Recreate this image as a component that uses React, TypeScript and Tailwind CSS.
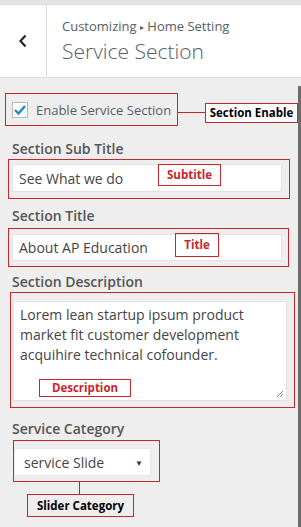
import React from "react";

const RED = "border-[#c9252d]";

function Label({ children, className = "" }: { children: React.ReactNode; className?: string }) {
  return <div className={`pl-[12px] text-[14px] leading-[20px] font-semibold text-[#555555] ${className}`}>{children}</div>;
}

function Tag({ children, className = "", dark = false }: { children: React.ReactNode; className?: string; dark?: boolean }) {
  return (
    <div
      className={`absolute border ${RED} flex items-center justify-center text-[11.5px] font-bold ${dark ? "bg-white text-black" : "text-[#c9252d]"} ${className}`}
    >
      {children}
    </div>
  );
}

export default function App() {
  const font = { fontFamily: '"Open Sans", "Noto Sans", sans-serif' };
  return (
    <div className="relative w-[301px] h-[527px] bg-[#eeeeee] overflow-hidden text-[#555d66] flex flex-col" style={font}>
      <div className="h-[4px] bg-[#e4e4e4] shrink-0" />
      <div className="flex h-[74px] shrink-0 bg-white border-t border-b border-[#dddddd]">
        <div className="w-[47px] flex items-center justify-center border-r border-[#dddddd]">
          <svg width="10" height="14" viewBox="0 0 10 14">
            <path d="M7.5 1.5 L2.5 7 L7.5 12.5" fill="none" stroke="#23282d" strokeWidth="2.2" />
          </svg>
        </div>
        <div className="flex flex-col pl-[15px] pt-[11px]">
          <div className="text-[13px] leading-[20px] text-[#555d66]">
            Customizing <span className="text-[8px] relative -top-[1px]">▸</span> Home Setting
          </div>
          <div className="text-[21px] leading-[26px] font-light text-[#555d66]">Service Section</div>
        </div>
      </div>
      <div className="absolute right-0 top-[86px] bottom-0 w-[3px] bg-[#6b6b6b]" />

      {/* Enable */}
      <div className="relative mt-[15px] ml-[5px] w-[173px] h-[33px] shrink-0">
        <div className={`h-full border ${RED} flex items-center gap-[8px] pl-[6px]`}>
          <div className="w-[16px] h-[16px] bg-white border border-[#b4b9be] flex items-center justify-center">
            <svg width="14" height="12" viewBox="0 0 14 12">
              <path d="M2 6 L5.5 9.5 L12 2" fill="none" stroke="#1e8cbe" strokeWidth="2.4" />
            </svg>
          </div>
          <span className="text-[13px] leading-[18px]">Enable Service Section</span>
        </div>
        <div className="absolute left-[172px] top-[19px] w-[28px] h-px bg-[#c9252d]" />
        <Tag dark className="left-[200px] top-[10px] w-[93px] h-[20px]">Section Enable</Tag>
      </div>

      {/* Sub title */}
      <Label className="mt-[13px]">Section Sub Title</Label>
      <div className={`relative ml-[8px] mt-[0px] w-[282px] h-[40px] border ${RED} pl-[3px] pt-[4px] shrink-0`}>
        <div className="w-[270px] h-[28px] bg-white border border-[#e2e2e2] flex items-center pl-[6px] text-[14px] text-[#444]">See What we do</div>
        <Tag className="left-[149px] top-[4px] w-[63px] h-[22px]">Subtitle</Tag>
      </div>

      {/* Title */}
      <Label className="mt-[7px]">Section Title</Label>
      <div className={`relative ml-[8px] mt-[2px] w-[281px] h-[39px] border ${RED} pl-[3px] pt-[5px] shrink-0`}>
        <div className="w-[270px] h-[27px] bg-white border border-[#e2e2e2] flex items-center pl-[6px] text-[14px] text-[#444]">About AP Education</div>
        <Tag className="left-[166px] top-[4px] w-[44px] h-[24px]">Title</Tag>
      </div>

      {/* Description */}
      <Label className="mt-[5px] leading-[18px]">Section Description</Label>
      <div className={`relative ml-[10px] mt-[0px] w-[285px] h-[116px] border ${RED} pl-[2px] pt-[8px] shrink-0`}>
        <div className="relative w-[274px] h-[100px] bg-white border border-[#e2e2e2] px-[6px] pt-[3px] text-[14px] leading-[20px] text-[#444]">
          Lorem lean startup ipsum product market fit customer development acquihire technical cofounder.
          <svg className="absolute right-[2px] bottom-[2px]" width="8" height="8" viewBox="0 0 8 8">
            <path d="M1 7 L7 1 M4 7 L7 4" stroke="#888" strokeWidth="1" />
          </svg>
        </div>
        <Tag className="left-[28px] top-[86px] w-[92px] h-[18px]">Description</Tag>
      </div>

      {/* Category */}
      <Label className="mt-[11px]">Service Category</Label>
      <div className={`relative ml-[13px] mt-[1px] w-[147px] h-[42px] border ${RED} pt-[7px] shrink-0`}>
        <div className="relative w-[137px] h-[28px] bg-white border border-[#e8e8e8] flex items-center pl-[9px] text-[14px] text-[#444]">
          service Slide
          <span className="absolute right-[7px] top-[8px] text-[8px] text-[#333]">▼</span>
        </div>
      </div>
      <div className="ml-[79px] w-px h-[12px] bg-[#c9252d] shrink-0" />
      <div className={`ml-[27px] w-[107px] h-[23px] border ${RED} flex items-center justify-center text-[11.5px] font-bold text-black shrink-0`}>
        Slider Category
      </div>
    </div>
  );
}
